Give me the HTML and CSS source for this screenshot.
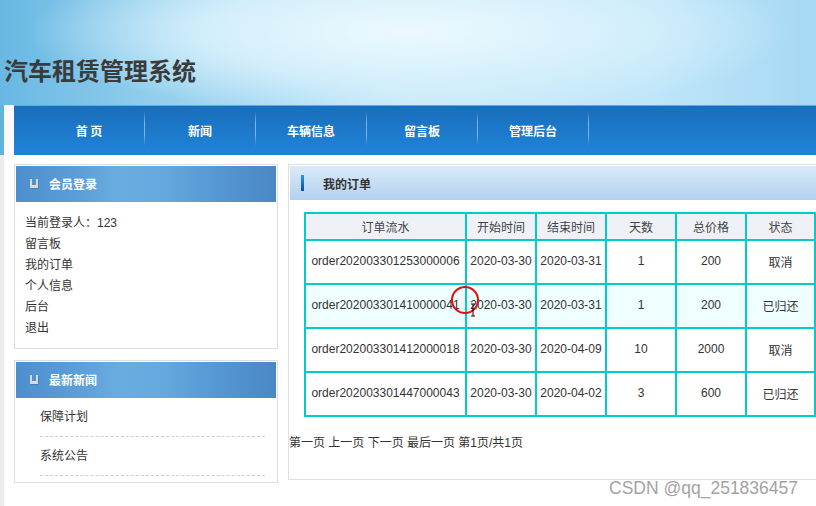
FILE: index.html
```html
<!DOCTYPE html>
<html lang="zh-CN">
<head>
<meta charset="utf-8">
<title>汽车租赁管理系统</title>
<link rel="stylesheet" href="styles.css">
</head>
<body>
<div class="header">
  <h1 class="title">汽车租赁管理系统</h1>
</div>
<div class="navrow">
  <div class="edge"></div>
  <div class="gap"></div>
  <ul class="nav">
    <li>首 页</li>
    <li>新闻</li>
    <li>车辆信息</li>
    <li>留言板</li>
    <li>管理后台</li>
  </ul>
</div>
<div class="main">
  <aside class="side">
    <div class="box">
      <div class="box-hd"><span class="ico"></span>会员登录</div>
      <div class="box-bd">
        <div>当前登录人：123</div>
        <div>留言板</div>
        <div>我的订单</div>
        <div>个人信息</div>
        <div>后台</div>
        <div>退出</div>
      </div>
    </div>
    <div class="box">
      <div class="box-hd"><span class="ico"></span>最新新闻</div>
      <ul class="news">
        <li>保障计划</li>
        <li>系统公告</li>
      </ul>
    </div>
  </aside>
  <section class="content">
    <div class="content-hd"><span class="bar"></span>我的订单</div>
    <table class="orders">
      <colgroup>
        <col class="c-id"><col class="c-n"><col class="c-n"><col class="c-n"><col class="c-n"><col class="c-last">
      </colgroup>
      <thead>
        <tr><th>订单流水</th><th>开始时间</th><th>结束时间</th><th>天数</th><th>总价格</th><th>状态</th></tr>
      </thead>
      <tbody>
        <tr><td>order202003301253000006</td><td>2020-03-30</td><td>2020-03-31</td><td>1</td><td>200</td><td>取消</td></tr>
        <tr class="hover"><td>order202003301410000041</td><td>2020-03-30</td><td>2020-03-31</td><td>1</td><td>200</td><td>已归还</td></tr>
        <tr><td>order202003301412000018</td><td>2020-03-30</td><td>2020-04-09</td><td>10</td><td>2000</td><td>取消</td></tr>
        <tr><td>order202003301447000043</td><td>2020-03-30</td><td>2020-04-02</td><td>3</td><td>600</td><td>已归还</td></tr>
      </tbody>
    </table>
    <div class="pager">第一页 上一页 下一页 最后一页 第1页/共1页</div>
  </section>
</div>
<div class="mark">
  <svg width="34" height="34" viewBox="0 0 34 34"><circle cx="15" cy="15" r="13" fill="none" stroke="#e01010" stroke-width="2"/><path d="M21 19h4M23 19v12M21 31h4" stroke="#111" stroke-width="1" fill="none"/></svg>
</div>
<div class="watermark">CSDN @qq_251836457</div>
</body>
</html>
```
FILE: styles.css
```css
* { box-sizing: border-box; }
html, body { margin: 0; padding: 0; }
body {
  width: 816px;
  height: 506px;
  overflow: hidden;
  position: relative;
  background: #fff;
  color: #333;
  font-family: "Liberation Sans", Arial, "Noto Sans CJK SC", sans-serif;
  font-size: 12px;
}

.header {
  height: 105px;
  padding: 56px 0 0 4px;
  background:
    radial-gradient(ellipse 55% 95% at 50% 30%, rgba(236,249,254,1) 0%, rgba(216,241,252,0.9) 45%, rgba(200,234,250,0) 85%),
    linear-gradient(to right, #68b8e3 0%, #9fd5f0 25%, #c8eafa 50%, #bfe6f9 80%, #a6d8f3 100%);
}
.title {
  margin: 0;
  font-family: "Noto Sans CJK SC", sans-serif;
  font-size: 24px;
  line-height: 27px;
  font-weight: bold;
  color: #3b3b3b;
}

.navrow { display: flex; height: 50px; }
.navrow .edge { width: 4px; background: #5cb4df; }
.navrow .gap { width: 10px; background: #fcf9fd; }
.nav {
  flex: 1;
  display: flex;
  margin: 0;
  padding: 0 0 1px 20px;
  list-style: none;
  background: linear-gradient(#1a6ebb, #1f84d8);
  border-top: 1px solid #4fb2e6;
}
.nav li {
  width: 111px;
  display: flex;
  align-items: center;
  justify-content: center;
  color: #fff;
  font-family: "Noto Sans CJK SC", sans-serif;
  font-weight: bold;
  font-size: 12px;
  border-right: 1px solid #7ab6ea;
  border-image: linear-gradient(to bottom, rgba(122,182,234,0) 12%, #7ab6ea 35%, #7ab6ea 60%, rgba(122,182,234,0) 82%) 1;
}

.main {
  display: flex;
  gap: 10px;
  padding: 9px 0 0 14px;
  background: linear-gradient(to right, #ececec 4px, #fff 4px);
  height: 351px;
}
.side { width: 264px; flex: none; }
.box { border: 1px solid #dedede; padding: 1px; }
.box + .box { margin-top: 11px; }
.box-hd {
  height: 36px;
  display: flex;
  align-items: center;
  gap: 11px;
  padding: 0 0 1px 14px;
  color: #fff;
  font-weight: bold;
  font-family: "Noto Sans CJK SC", sans-serif;
  background: linear-gradient(to right, #4d8fce 0%, #5a9dd7 22%, #69ade0 40%, #64a8dd 58%, #5597d2 78%, #4a87c6 100%);
}
.ico {
  width: 8px;
  height: 9px;
  border: 2px solid #d9d9d9;
  border-top: none;
  border-bottom-width: 3px;
  box-shadow: 1px 1px 0 rgba(0,0,0,0.12);
}
.box-bd { padding: 11px 9px 8px; line-height: 21px; }
.news {
  list-style: none;
  margin: 0;
  padding: 0 11px 5px 24px;
}
.news li {
  height: 39px;
  line-height: 39px;
  border-bottom: 1px dashed #cfcfcf;
}

.content {
  width: 540px;
  flex: none;
  height: 316px;
  border: 1px solid #e0e0e0;
}
.content-hd {
  margin: 1px;
  height: 34px;
  display: flex;
  align-items: center;
  gap: 19px;
  padding-left: 11px;
  font-weight: bold;
  font-family: "Noto Sans CJK SC", sans-serif;
  color: #333;
  background: linear-gradient(#dbeafa, #b3d1ee);
}
.bar {
  width: 3px;
  height: 16px;
  background: linear-gradient(#2a96e8, #0350a8);
}

.orders {
  margin: 12px 0 0 15px;
  width: 512px;
  table-layout: fixed;
  border-collapse: separate;
  border-spacing: 0;
  border-left: 2px solid #00cccc;
  border-top: 2px solid #00cccc;
}
.c-id { width: 161px; }
.c-n { width: 70px; }
.c-last { width: 69px; }
.orders th, .orders td {
  padding: 0;
  text-align: center;
  border-right: 2px solid #00cccc;
  border-bottom: 2px solid #00cccc;
  white-space: nowrap;
}
.orders th {
  height: 27px;
  font-weight: normal;
  color: #444;
  background: #eef2f7;
}
.orders td { height: 44px; padding-bottom: 2px; }
.orders tr.hover td { background: #effefe; }

.pager {
  margin-top: 16px;
  line-height: 20px;
  padding-left: 0;
}

.mark {
  position: absolute;
  left: 450px;
  top: 285px;
  width: 34px;
  height: 34px;
}
.watermark {
  position: absolute;
  left: 609px;
  top: 477px;
  font-size: 17.5px;
  line-height: 22px;
  color: #a3a3a3;
}
```
